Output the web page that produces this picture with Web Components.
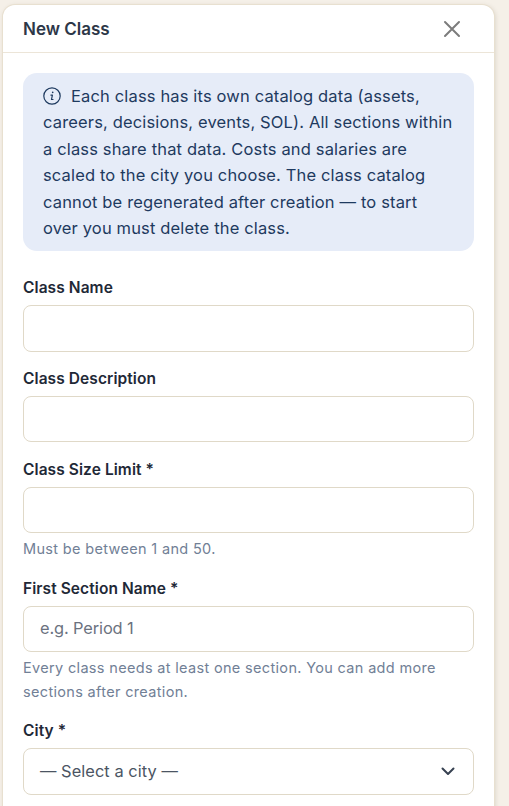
<!DOCTYPE html>
<html><head><meta charset="utf-8"><style>
html,body{margin:0;height:100%;overflow:hidden;background:#f5f0e8;font-family:"Inter","Liberation Sans",sans-serif}
body{padding:5px 15px 0 3px;box-sizing:border-box;height:806px}
</style></head><body>
<modal-panel heading="New Class">
<info-box>Each class has its own catalog data (assets, careers, decisions, events, SOL). All sections within a class share that data. Costs and salaries are scaled to the city you choose. The class catalog cannot be regenerated after creation — to start over you must delete the class.</info-box>
<form-field label="Class Name"></form-field>
<form-field label="Class Description"></form-field>
<form-field label="Class Size Limit *" help="Must be between 1 and 50."></form-field>
<form-field label="First Section Name *" placeholder="e.g. Period 1" help="Every class needs at least one section. You can add more sections after creation."></form-field>
<form-field label="City *" select="— Select a city —"></form-field>
</modal-panel>
<script>
function def(name,html,setup){customElements.define(name,class extends HTMLElement{connectedCallback(){if(this.shadowRoot)return;const r=this.attachShadow({mode:'open'});r.innerHTML=html;setup&&setup(this,r)}})}
def('modal-panel',`<style>
:host{display:block;background:#fff;border-radius:12px 12px 0 0;box-shadow:0 0 0 1px #e8e0d0,1px 1px 5px rgba(80,60,30,.18);height:900px;color:#1f2937}
header{display:flex;justify-content:space-between;align-items:center;height:47px;padding:0 20px;border-bottom:1px solid #ece5d8}
h2{margin:0;font:600 17px/24px Inter,sans-serif;color:#2d3748;letter-spacing:0}
button{all:unset;display:flex;width:24px;height:24px;align-items:center;justify-content:center;margin-right:10px}
main{display:flex;flex-direction:column;padding:20px}
</style><header><h2></h2><button aria-label="Close"><svg width="24" height="24" viewBox="0 0 24 24" fill="none" stroke="#7c7c7c" stroke-width="2" stroke-linecap="round"><path d="M5 5l14 14M19 5L5 19"/></svg></button></header><main><slot></slot></main>`,(h,r)=>{r.querySelector('h2').textContent=h.getAttribute('heading')});
def('info-box',`<style>
:host{display:block;background:#e6ecf8;border-radius:14px;padding:10px 20px;color:#1e3a5f;font:400 16.5px/26.4px Inter,sans-serif;letter-spacing:.15px;margin-bottom:27px}
svg{vertical-align:-3px;margin-right:10px}
</style><svg width="18" height="18" viewBox="0 0 18 18" fill="none" stroke="#1e3a5f" stroke-width="1.2" stroke-linecap="round" stroke-linejoin="round"><circle cx="9" cy="9" r="8.2"/><path d="M7.9 8.1h1.5l-.9 4.4h1.5"/><path d="M9.7 5.3v.1" stroke-width="1.6"/></svg><slot></slot>`);
def('form-field',`<style>
:host{display:block;margin-bottom:17.5px}
label{display:block;font:600 15.5px/20px Inter,sans-serif;color:#1f2937;letter-spacing:.08px;margin-bottom:7px}
.box{box-sizing:border-box;height:46.25px;border:1px solid #e0d9c8;border-radius:8px;display:flex;align-items:center;justify-content:space-between;padding:0 16px 1px;font:400 16.4px/24px Inter,sans-serif;letter-spacing:-.12px;color:#6b7280}
.sel{color:#4b5563;letter-spacing:.05px}
.sel svg{margin-right:1px}
small{display:block;margin-top:4px;font:400 14.5px/24px Inter,sans-serif;color:#718096;letter-spacing:.33px}
</style><label></label><div class="box"><span class="t"></span></div><small></small>`,(h,r)=>{
r.querySelector('label').textContent=h.getAttribute('label');
const t=r.querySelector('.t'),b=r.querySelector('.box'),s=h.getAttribute('select');
t.textContent=s||h.getAttribute('placeholder')||'';
if(s){b.classList.add('sel');b.insertAdjacentHTML('beforeend','<svg width="16" height="16" viewBox="0 0 16 16" fill="none" stroke="#374151" stroke-width="2" stroke-linecap="round" stroke-linejoin="round"><path d="M2.5 5.5L8 11l5.5-5.5"/></svg>')}
const m=r.querySelector('small'),help=h.getAttribute('help');if(help)m.textContent=help;else m.remove();
});
</script>
</body></html>
